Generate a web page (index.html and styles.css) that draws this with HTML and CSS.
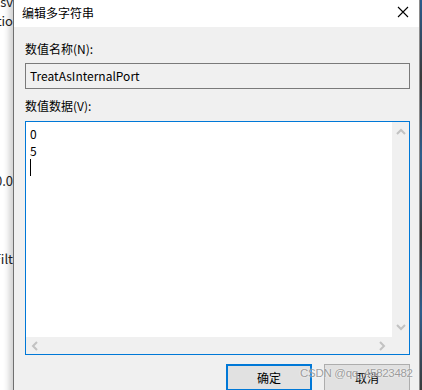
FILE: index.html
```html
<!DOCTYPE html>
<html lang="zh-CN">
<head>
  <meta charset="UTF-8" />
  <title>编辑多字符串</title>
  <link rel="stylesheet" href="styles.css">
</head>
<body>

  <div class="screen">
    <!-- window behind the dialog -->
    <div class="behind">
      <div class="behind-line l1">csv</div>
      <div class="behind-line l2">Actio</div>
      <div class="behind-line l3">10.0</div>
      <div class="behind-line l4">Filt</div>
    </div>

    <div class="dialog">
      <div class="titlebar">
        <span class="title">编辑多字符串</span>
        <svg class="close" width="12" height="12" viewBox="0 0 12 12">
          <path d="M1 1 L11 11 M11 1 L1 11" stroke="#000" stroke-width="1.1" fill="none"/>
        </svg>
      </div>

      <div class="dialog-body">
        <div class="label">数值名称(N):</div>
        <div class="readonly-box">TreatAsInternalPort</div>

        <div class="label label-data">数值数据(V):</div>
        <div class="editor">
          <div class="editor-main">
            <div class="editor-text">
              <div class="line">0</div>
              <div class="line">5</div>
              <div class="line"><span class="caret"></span></div>
            </div>
            <div class="vscroll">
              <svg width="10" height="8" viewBox="0 0 10 8"><path d="M1 6 L5 2 L9 6" stroke="#c2c2c2" stroke-width="2" fill="none"/></svg>
              <svg width="10" height="8" viewBox="0 0 10 8"><path d="M1 2 L5 6 L9 2" stroke="#c2c2c2" stroke-width="2" fill="none"/></svg>
            </div>
          </div>
          <div class="hscroll-row">
            <div class="hscroll">
              <svg width="8" height="10" viewBox="0 0 8 10"><path d="M6 1 L2 5 L6 9" stroke="#c2c2c2" stroke-width="2" fill="none"/></svg>
              <svg width="8" height="10" viewBox="0 0 8 10"><path d="M2 1 L6 5 L2 9" stroke="#c2c2c2" stroke-width="2" fill="none"/></svg>
            </div>
            <div class="corner"></div>
          </div>
        </div>

        <div class="buttons">
          <div class="btn btn-default">确定</div>
          <div class="btn">取消</div>
        </div>
      </div>

      <div class="watermark">CSDN @qq_45823482</div>
    </div>

    <div class="behind-right"></div>
  </div>

</body>
</html>
```

FILE: styles.css
```css
body {
  margin: 0;
  background: #fff;
  font-family: "Noto Sans CJK SC", "Noto Sans", sans-serif;
  font-size: 12px;
  color: #000;
  overflow: hidden;
}

.screen {
  display: flex;
  width: 422px;
  height: 390px;
  overflow: hidden;
}

/* bits of the window underneath */
.behind {
  width: 13px;
  flex: none;
  overflow: hidden;
  background: #fff;
  font-size: 13px;
  color: #222;
}

.behind-line {
  white-space: nowrap;
  line-height: 16px;
  direction: rtl;
  text-align: left;
  width: 13px;
}

.l1 { margin-top: -6px; }
.l2 { margin-top: 3px; }
.l3 { margin-top: 144px; }
.l4 { margin-top: 62px; }

.behind-right {
  width: 2px;
  flex: none;
  background: linear-gradient(#2a5d8f, #3b3b3b 20%, #2f5f8e 40%, #3b3b3b 60%, #2f5f8e 80%, #3b3b3b);
}

.dialog {
  position: relative;
  flex: none;
  width: 405px;
  height: 400px;
  border-left: 1px solid #6f6f6f;
  border-right: 1px solid #8a8a8a;
  background: #f0f0f0;
  box-shadow: -4px 0 6px rgba(0, 0, 0, 0.18);
}

.titlebar {
  height: 27px;
  background: #fff;
  display: flex;
  align-items: center;
  justify-content: space-between;
  padding: 0 10px 3px 8px;
  box-sizing: border-box;
}

.title {
  font-size: 12px;
}

.dialog-body {
  padding: 14px 9px 0 11px;
}

.label {
  line-height: 16px;
  color: #000;
}

.readonly-box {
  margin-top: 6px;
  height: 26px;
  box-sizing: border-box;
  border: 1px solid #7a7a7a;
  background: #f0f0f0;
  padding: 0 4px;
  line-height: 24px;
}

.label-data {
  margin-top: 9px;
}

.editor {
  margin-top: 7px;
  height: 234px;
  box-sizing: border-box;
  border: 1px solid #0078d7;
  background: #fff;
  display: flex;
  flex-direction: column;
}

.editor-main {
  flex: 1;
  display: flex;
}

.editor-text {
  flex: 1;
  padding: 3px 4px 0;
}

.line {
  line-height: 17px;
  height: 17px;
}

.caret {
  display: inline-block;
  width: 1px;
  height: 17px;
  background: #000;
  vertical-align: top;
}

.vscroll {
  width: 17px;
  background: #f0f0f0;
  display: flex;
  flex-direction: column;
  justify-content: space-between;
  align-items: center;
  padding: 6px 0 6px;
}

.hscroll-row {
  height: 17px;
  display: flex;
}

.hscroll {
  flex: 1;
  background: #f0f0f0;
  display: flex;
  justify-content: space-between;
  align-items: center;
  padding: 0 6px 0 5px;
}

.corner {
  width: 17px;
  background: #f0f0f0;
}

.buttons {
  display: flex;
  justify-content: flex-end;
  gap: 12px;
  margin-top: 9px;
}

.btn {
  width: 86px;
  height: 27px;
  box-sizing: border-box;
  border: 1px solid #adadad;
  background: #e1e1e1;
  display: flex;
  align-items: center;
  justify-content: center;
}

.btn-default {
  border: 2px solid #0078d7;
}

.watermark {
  position: absolute;
  left: 286px;
  top: 367px;
  font-family: "Liberation Sans", sans-serif;
  font-size: 11.5px;
  letter-spacing: -0.3px;
  color: rgba(140, 140, 140, 0.85);
  text-shadow: 0 0 2px #fff;
  white-space: nowrap;
}
```
